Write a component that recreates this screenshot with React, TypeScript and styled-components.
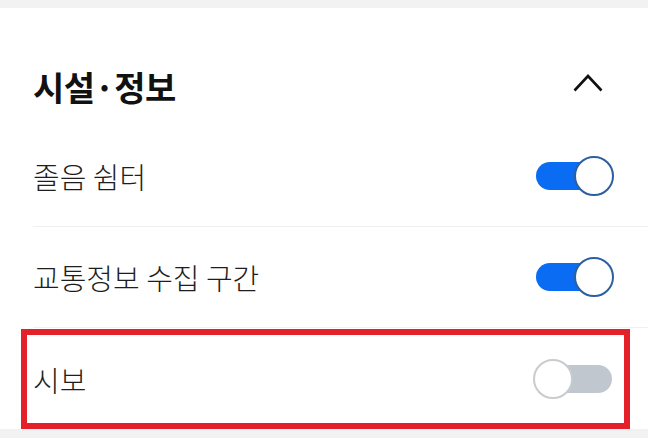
import React, { useState } from "react";
import styled, { createGlobalStyle } from "styled-components";

const GlobalStyle = createGlobalStyle`
  html, body { margin: 0; padding: 0; background: #ffffff; }
  body { font-family: "Noto Sans CJK KR", "Noto Sans", sans-serif; }
  * { box-sizing: border-box; }
`;

const Page = styled.div`
  width: 648px;
  height: 438px;
  overflow: hidden;
  display: flex;
  flex-direction: column;
  background: #ffffff;
`;

const GrayBand = styled.div<{ $h: number }>`
  height: ${(p) => p.$h}px;
  flex: 0 0 auto;
  background: #f2f2f2;
`;

const Section = styled.section`
  flex: 1 1 auto;
  display: flex;
  flex-direction: column;
`;

const Header = styled.div`
  height: 118px;
  padding: 58px 45px 0 33px;
  display: flex;
  align-items: flex-start;
  justify-content: space-between;
`;

const Title = styled.h2`
  margin: 0;
  font-size: 34px;
  line-height: 42px;
  font-weight: 700;
  color: #111111;
  letter-spacing: -0.5px;
`;

const ChevronButton = styled.button`
  border: 0;
  padding: 0;
  margin-top: 8px;
  background: transparent;
  width: 30px;
  height: 18px;
  display: flex;
`;

const List = styled.div`
  padding-left: 33px;
  display: flex;
  flex-direction: column;
`;

const Row = styled.div<{ $divider: boolean }>`
  position: relative;
  height: 101px;
  padding-right: 36px;
  display: flex;
  align-items: center;
  justify-content: space-between;
  border-bottom: ${(p) => (p.$divider ? "1px solid #f0f0f0" : "0")};
`;

const Label = styled.span`
  font-size: 29px;
  line-height: 34px;
  font-weight: 300;
  color: #1e1e1e;
  letter-spacing: 0;
`;

const Highlight = styled.div`
  position: absolute;
  top: 1px;
  bottom: 0;
  left: -12px;
  right: 18px;
  border: 6px solid #e4202b;
  pointer-events: none;
`;

const Track = styled.button<{ $on: boolean }>`
  position: relative;
  width: 76px;
  height: 28px;
  border: 0;
  padding: 0;
  border-radius: 14px;
  background: ${(p) => (p.$on ? "#0a6cf2" : "#c1c7ce")};
  cursor: pointer;
`;

const Knob = styled.span<{ $on: boolean }>`
  position: absolute;
  top: -6px;
  left: ${(p) => (p.$on ? "38px" : "-3px")};
  width: 40px;
  height: 40px;
  border-radius: 50%;
  background: #ffffff;
  border: 2px solid ${(p) => (p.$on ? "#2c5f9e" : "#c9cbcd")};
`;

type Item = { label: string; on: boolean; highlight?: boolean };

const initial: Item[] = [
  { label: "졸음 쉼터", on: true },
  { label: "교통정보 수집 구간", on: true },
  { label: "시보", on: false, highlight: true },
];

export default function App() {
  const [items, setItems] = useState(initial);
  const toggle = (i: number) =>
    setItems((prev) => prev.map((it, j) => (j === i ? { ...it, on: !it.on } : it)));

  return (
    <Page>
      <GlobalStyle />
      <GrayBand $h={8} />
      <Section>
        <Header>
          <Title>시설·정보</Title>
          <ChevronButton aria-label="접기">
            <svg width="30" height="18" viewBox="0 0 30 18" fill="none">
              <polyline
                points="1.5,16.5 15,2 28.5,16.5"
                stroke="#111"
                strokeWidth="2.6"
                strokeLinecap="butt"
                strokeLinejoin="miter"
              />
            </svg>
          </ChevronButton>
        </Header>
        <List>
          {items.map((it, i) => (
            <Row key={it.label} $divider={i < items.length - 1}>
              <Label>{it.label}</Label>
              <Track $on={it.on} onClick={() => toggle(i)} aria-pressed={it.on}>
                <Knob $on={it.on} />
              </Track>
              {it.highlight && <Highlight />}
            </Row>
          ))}
        </List>
      </Section>
      <GrayBand $h={10} />
    </Page>
  );
}
